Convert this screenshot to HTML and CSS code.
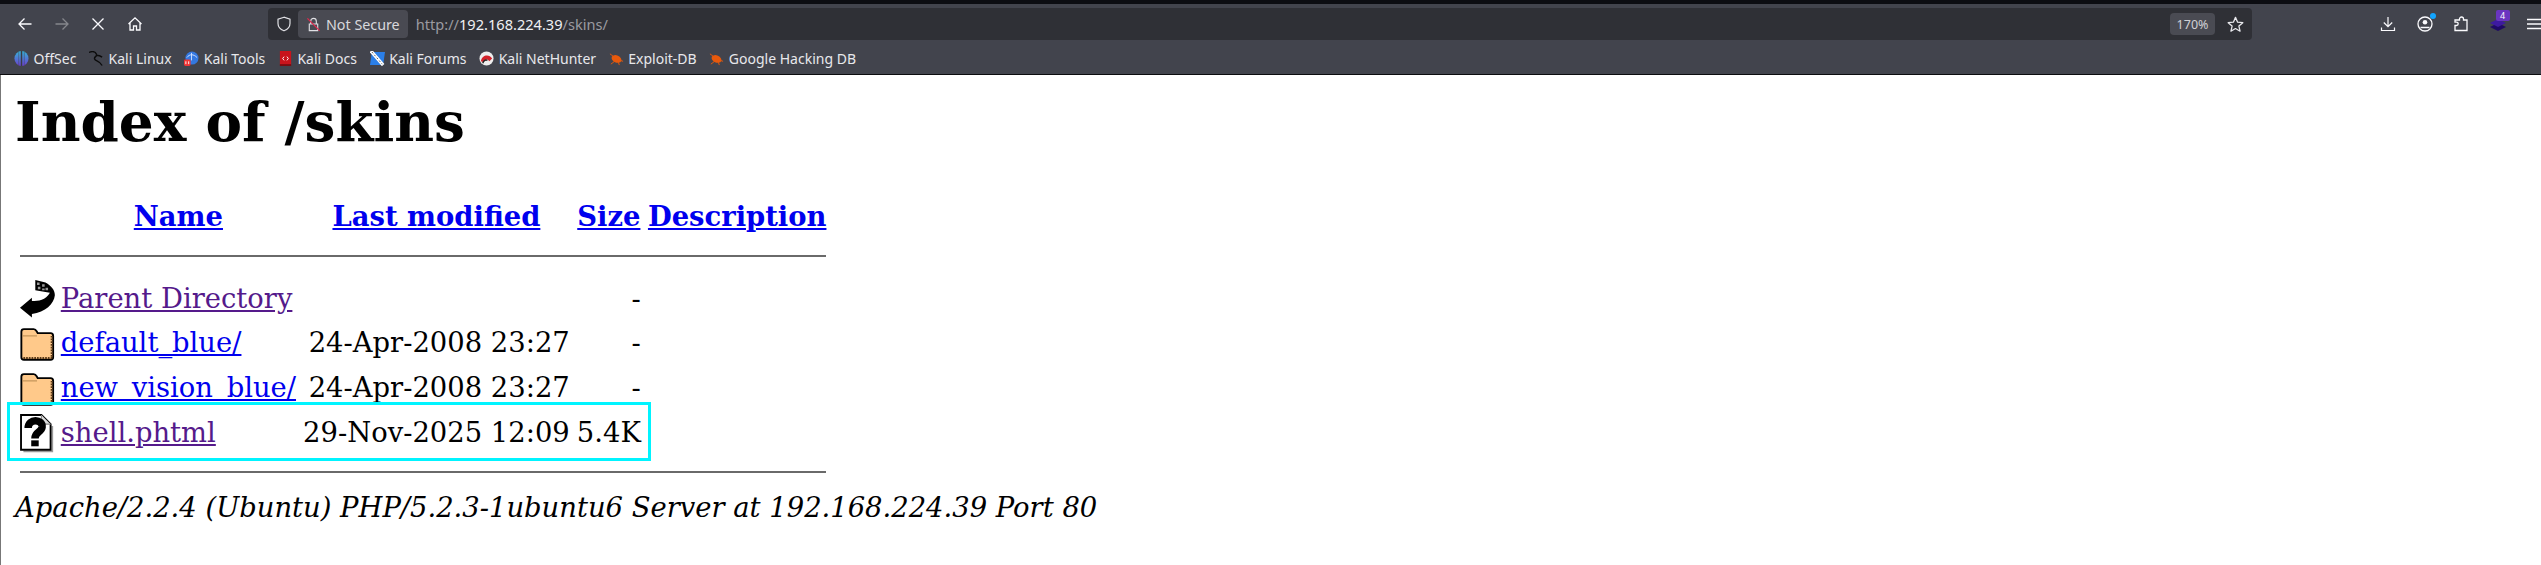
FILE: index.html
```html
<!DOCTYPE html>
<html>
<head>
<meta charset="utf-8">
<title>Index of /skins</title>
<link rel="stylesheet" href="styles.css">
</head>
<body>
<div class="chrome">
  <div class="topstrip"></div>
  <div class="navbar">
    <div class="navbtns">
      <svg class="ic" viewBox="0 0 16 16"><path d="M14.500 8H2M7.500 2.500 2 8l5.500 5.500" fill="none" stroke="#fbfbfe" stroke-width="1.300"/></svg>
      <svg class="ic" viewBox="0 0 16 16"><path d="M1.500 8H14M8.500 2.500 14 8l-5.500 5.500" fill="none" stroke="#85868c" stroke-width="1.300"/></svg>
      <svg class="ic" viewBox="0 0 16 16"><path d="M2.500 2.500l11 11M13.500 2.500l-11 11" fill="none" stroke="#fbfbfe" stroke-width="1.300"/></svg>
      <svg class="ic" viewBox="0 0 16 16"><path d="M1.500 8 8 1.800 14.500 8M3 7v7h3.500v-4h3v4H13V7" fill="none" stroke="#fbfbfe" stroke-width="1.300"/></svg>
    </div>
    <div class="urlbar">
      <svg class="shield" viewBox="0 0 16 16"><path d="M8 1.200 2 3.200v4.300c0 3.500 2.800 6 6 7.300 3.200-1.300 6-3.800 6-7.300V3.200z" fill="none" stroke="#e0e0e4" stroke-width="1.200"/></svg>
      <div class="secure">
        <svg class="lock" viewBox="0 0 16 16"><path d="M5 7V4.500a3 3 0 0 1 6 0V7M3.500 7.500h9v7h-9z" fill="none" stroke="#e0e0e4" stroke-width="1.200"/><path d="M1.500 1.500l13 13" stroke="#e2284c" stroke-width="1.300"/></svg>
        <span>Not Secure</span>
      </div>
      <div class="url"><span class="scheme">http://</span><span class="host">192.168.224.39</span><span class="scheme">/skins/</span></div>
      <div class="zoomlvl">170%</div>
      <svg class="star" viewBox="0 0 16 16"><path d="M8 1.300l2 4.500 4.900.5-3.700 3.200 1.100 4.800L8 11.800l-4.300 2.500 1.100-4.800L1.100 6.300 6 5.800z" fill="none" stroke="#e8e8ec" stroke-width="1.200" stroke-linejoin="round"/></svg>
    </div>
    <div class="tools">
      <svg class="ic" viewBox="0 0 16 16"><path d="M8 1v9.500M3.800 6.500 8 10.700l4.200-4.200M1.500 11.500v3h13v-3" fill="none" stroke="#fbfbfe" stroke-width="1.200"/></svg>
      <div class="acct">
        <svg class="ic" viewBox="0 0 16 16"><circle cx="8" cy="8" r="7" fill="none" stroke="#fbfbfe" stroke-width="1.300"/><circle cx="8" cy="6.300" r="2.300" fill="#fbfbfe"/><path d="M3.500 11.500h9" stroke="#fbfbfe" stroke-width="1.500"/></svg>
        <span class="dot"></span>
      </div>
      <svg class="ic" viewBox="0 0 16 16"><path d="M2 14.500V9.500h1.500a1.700 1.700 0 0 0 0-3.400H2V4h4.500V3a2 2 0 0 1 4 0v1h3.500v10.500z" fill="none" stroke="#fbfbfe" stroke-width="1.300"/></svg>
      <div class="ext">
        <svg class="ic" viewBox="0 0 16 16"><path d="M8 7 16 11 8 15 0 11z" fill="#1f0a66"/><path d="M8 3 16 7 8 11 0 7z" fill="#3d1aa0"/></svg>
        <span class="badge">4</span>
      </div>
      <svg class="ic" viewBox="0 0 16 16"><path d="M1 3.500h14M1 8h14M1 12.500h14" stroke="#fbfbfe" stroke-width="1.300"/></svg>
    </div>
  </div>
  <div class="bookmarks">
    <div class="bm"><svg class="fav" viewBox="0 0 16 16"><defs><linearGradient id="os" x1="0" y1="0" x2="0" y2="1"><stop offset="0" stop-color="#35b4d8"/><stop offset="1" stop-color="#6a3fd0"/></linearGradient></defs><ellipse cx="8" cy="8" rx="7.500" ry="8" fill="url(#os)"/><path d="M8 0v16" stroke="#3a3c44" stroke-width="1.600"/><path d="M5 1v14M11 1v14" stroke="#42444d" stroke-width=".5"/></svg>OffSec</div>
    <div class="bm"><svg class="fav" viewBox="0 0 16 16"><path d="M0 1.500c4-1.500 7-.5 8 2s-3 2.500-2 5 5 1.500 8 7M8 4.500c2 0 4 .5 6 2" fill="none" stroke="#0c0c0c" stroke-width="1.500"/></svg>Kali Linux</div>
    <div class="bm"><svg class="fav" viewBox="0 0 16 16"><circle cx="8.500" cy="7.500" r="7" fill="#3478e0"/><path d="M3 7c3-4 7-4 11 0M8 2v8" fill="none" stroke="#cfe0ff" stroke-width="1"/><rect x="0" y="9" width="7" height="7" rx="1.500" fill="#e33"/><path d="M2 11v3M5 11v3" stroke="#fff"/></svg>Kali Tools</div>
    <div class="bm"><svg class="fav" viewBox="0 0 16 16"><rect x="2" y="0" width="12" height="15" fill="#c8141c"/><rect x="2" y="14" width="12" height="2" fill="#7a0c10"/><path d="M6.500 6 5 8l1.500 2M9.500 6 11 8l-1.500 2" fill="none" stroke="#fff"/></svg>Kali Docs</div>
    <div class="bm"><svg class="fav" viewBox="0 0 16 16"><path d="M2 1h14l-2 14H0z" fill="#2b7fe8"/><path d="M1 0l13 15" stroke="#fff" stroke-width="3.500"/><path d="M2 1l11 13" stroke="#555" stroke-width="1" stroke-dasharray="2 2"/></svg>Kali Forums</div>
    <div class="bm"><svg class="fav" viewBox="0 0 16 16"><circle cx="8" cy="8" r="7.500" fill="#eee"/><path d="M2 11c1-7 9-8 12-3l-3 3c-2-3-5-2-6 1z" fill="#d3222a"/><path d="M4 13c1-3 3-4 5-3" fill="none" stroke="#222" stroke-width="1.500"/></svg>Kali NetHunter</div>
    <div class="bm"><svg class="fav" viewBox="0 0 16 16"><ellipse cx="8" cy="8.500" rx="5.500" ry="3.800" transform="rotate(25 8 8.500)" fill="#e8590c"/><path d="M1 3l4 3M2 14l4-3M10 12l1 3M15 11l-3-1" stroke="#e8590c"/></svg>Exploit-DB</div>
    <div class="bm"><svg class="fav" viewBox="0 0 16 16"><ellipse cx="8" cy="8.500" rx="5.500" ry="3.800" transform="rotate(25 8 8.500)" fill="#e8590c"/><path d="M1 3l4 3M2 14l4-3M10 12l1 3M15 11l-3-1" stroke="#e8590c"/></svg>Google Hacking DB</div>
  </div>
</div>
<main class="page">
  <h1>Index of /skins</h1>
  <table>
    <tr><th class="ihead"></th><th><a href="#n">Name</a></th><th><a href="#m">Last modified</a></th><th><a href="#s">Size</a></th><th><a href="#d">Description</a></th></tr>
    <tr><th colspan="5"><hr class="rule-top"></th></tr>
    <tr><td><svg class="fi" viewBox="0 0 20 22"><path d="M9 0 15 1.500C18.500 3.500 20.500 6 20.500 9 20 14 15 19 7 20V22L0 16.300 7 10.400V12.400C11 12.400 15 12 17.600 7.500L15 7 9 6z" fill="#000"/><path d="M10 1.500h1.500v1.500H10zM13 2.500h1.500V4H13zM10.500 4H12v1.500h-1.500zM15 4.500h1.500V6H15zM13 5h1.500v1H13z" fill="#999"/></svg></td><td><a class="seen" href="#p">Parent Directory</a></td><td>&nbsp;</td><td class="r">-</td><td>&nbsp;</td></tr>
    <tr><td><svg class="fi" viewBox="0 0 20 22"><path d="M.8 4.500Q.8 3 2.300 3H8Q9.200 3 9.800 4.300L10.400 5.400H18Q19.500 5.400 19.500 7V19.500Q19.500 21 18 21H2.300Q.8 21 .8 19.500z" fill="#ffc98a" stroke="#000" stroke-width="1.100"/><path d="M1.500 7H10" stroke="#b88a50" stroke-width=".6"/><path d="M2 20h17M18.700 7v13" stroke="#5a3a18" stroke-width="1.300" stroke-dasharray="1 .6"/></svg></td><td><a href="#b">default_blue/</a></td><td class="r">24-Apr-2008 23:27</td><td class="r">-</td><td>&nbsp;</td></tr>
    <tr><td><svg class="fi" viewBox="0 0 20 22"><path d="M.8 4.500Q.8 3 2.300 3H8Q9.200 3 9.800 4.300L10.400 5.400H18Q19.500 5.400 19.500 7V19.500Q19.500 21 18 21H2.300Q.8 21 .8 19.500z" fill="#ffc98a" stroke="#000" stroke-width="1.100"/><path d="M1.500 7H10" stroke="#b88a50" stroke-width=".6"/><path d="M2 20h17M18.700 7v13" stroke="#5a3a18" stroke-width="1.300" stroke-dasharray="1 .6"/></svg></td><td><a href="#v">new_vision_blue/</a></td><td class="r">24-Apr-2008 23:27</td><td class="r">-</td><td>&nbsp;</td></tr>
    <tr><td><svg class="fi" viewBox="0 0 20 22"><path d="M19 7v15H2" fill="none" stroke="#999" stroke-width="1"/><path d="M.6.600h12L18 6v15H.6z" fill="#fff" stroke="#000" stroke-width="1.100"/><path d="M12.600.600V6H18" fill="#ddd" stroke="#888" stroke-width=".7"/><path d="M4.800 8.300C4.800 2.300 13.600 2.800 13 7.800 12.500 11 8.800 10.300 8.800 14.400" fill="none" stroke="#000" stroke-width="4.400"/><path d="M6.600 15.500h4.400v3.500H6.600z" fill="#000"/></svg></td><td><a class="seen" href="#x">shell.phtml</a></td><td class="r">29-Nov-2025 12:09</td><td class="r">5.4K</td><td>&nbsp;</td></tr>
    <tr><th colspan="5"><hr class="rule-bottom"></th></tr>
  </table>
  <address>Apache/2.2.4 (Ubuntu) PHP/5.2.3-1ubuntu6 Server at 192.168.224.39 Port 80</address>
  <div class="mark"></div>
</main>
</body>
</html>
```
FILE: styles.css
```css
html, body { margin: 0; padding: 0; background: #fff; height: 565px; overflow: hidden; }
body { font-family: "DejaVu Serif", serif; box-shadow: inset 1px 0 #777; }

.chrome { height: 75px; background: #42444d; display: flex; flex-direction: column; font-family: "Noto Sans", sans-serif; color: #fbfbfe; border-bottom: 1px solid #0c0c0f; box-sizing: border-box; }
.topstrip { height: 4px; background: #0c0d12; flex: none; }
.navbar { height: 36px; flex: none; display: flex; align-items: center; padding-top: 4px; box-sizing: border-box; }
.navbtns { display: flex; gap: 20.5px; width: 268px; padding-left: 17px; box-sizing: border-box; flex: none; }
.ic { width: 16px; height: 16px; display: block; }
.urlbar { width: 1984px; height: 32px; background: #2f3036; border-radius: 4px; display: flex; align-items: center; flex: none; box-sizing: border-box; padding-left: 8px; font-size: 14.6px; }
.shield { width: 16px; height: 16px; margin-right: 6px; flex: none; }
.secure { display: flex; align-items: center; height: 28px; background: #494a52; border-radius: 4px; padding: 0 8px; gap: 5px; color: #d8d8dc; font-size: 14.3px; }
.lock { width: 15px; height: 15px; }
.url { flex: 1; padding-left: 8px; white-space: nowrap; }
.host { color: #f0f0f4; }
.scheme { color: #9a9aa0; }
.zoomlvl { width: 45px; height: 22px; background: #4a4b53; border-radius: 4px; color: #d0d0d4; font-size: 12.5px; display: flex; align-items: center; justify-content: center; margin-right: 12px; }
.star { width: 17px; height: 17px; margin-right: 8px; flex: none; }
.tools { flex: 1; display: flex; gap: 20.5px; padding-left: 128px; box-sizing: border-box; align-items: center; }
.acct, .ext { position: relative; }
.dot { position: absolute; right: -3px; top: -3px; width: 6px; height: 6px; background: #12a5ff; border-radius: 50%; }
.badge { position: absolute; right: -4px; top: -6px; width: 14px; height: 11px; background: #6a35c0; border-radius: 2px; font-size: 9px; line-height: 11px; text-align: center; }
.bookmarks { height: 34px; flex: none; display: flex; align-items: center; padding: 3px 0 0 14px; gap: 12.7px; font-size: 14px; color: #e8e8ec; box-sizing: border-box; }
.bm { display: flex; align-items: center; gap: 4.5px; white-space: nowrap; }
.fav { width: 15px; height: 15px; flex: none; }

.page { position: relative; padding: 0 15px; font-size: 27.4px; color: #000; }
h1 { font-size: 54.8px; font-weight: bold; margin: 0 0 42px; padding-top: 16px; line-height: 63px; }
a { color: #0000ee; }
a.seen { color: #551a8b; }
table { border-spacing: 3.4px; border-collapse: separate; }
th, td { padding: 1.7px 2.4px 1.7px 1.7px; white-space: nowrap; }
th { font-weight: bold; line-height: 31.6px; }
td { vertical-align: top; height: 38.3px; line-height: 38.3px; }
td.r { text-align: right; }
hr { border: 0; height: 2px; background: #6a6a6a; }
.rule-top { margin: 16.5px 0 16px; }
.rule-bottom { margin: 13px 0 5px; }
.fi { width: 34px; height: 37.4px; display: block; overflow: visible; }
address { font-style: italic; margin-top: 8.6px; line-height: 32px; }
.mark { position: absolute; left: 7px; top: 327px; width: 644px; height: 59px; box-sizing: border-box; border: 3px solid #00f4ff; }
```
